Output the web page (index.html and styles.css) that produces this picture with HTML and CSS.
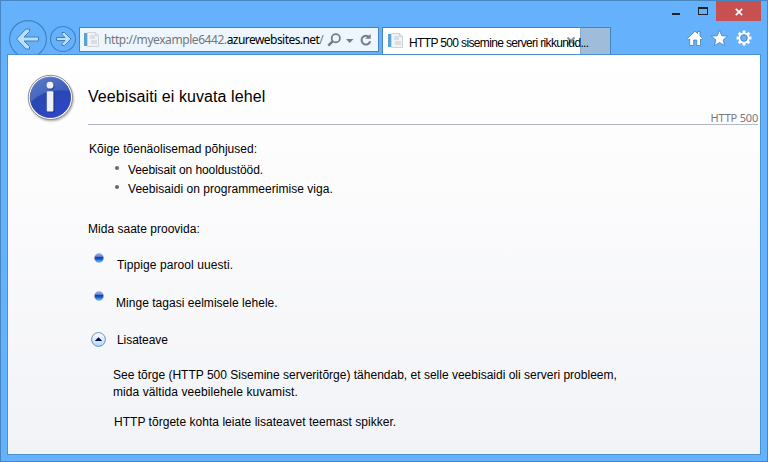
FILE: index.html
```html
<!DOCTYPE html>
<html lang="et">
<head>
<meta charset="utf-8">
<title>HTTP 500 sisemine serveri rikkunud</title>
<link rel="stylesheet" href="styles.css">
</head>
<body>
<div class="window">
  <header class="chrome">
    <div class="nav">
      <svg width="70" height="37" viewBox="8 18 70 37">
        <g fill="none" stroke="#4082bd" stroke-width="1.1"><circle cx="28" cy="39" r="18.4"/><circle cx="63" cy="39" r="12.5"/></g>
        <g fill="#b9e0ff" stroke="#427fb6" stroke-width="1" stroke-linejoin="round">
          <path d="M16.5 39 26 29H29.5V31.5L24 37H38.5V41H24L29.5 46.5V49H26Z"/>
          <path d="M71 39 64.5 32.5H62V34.5L65 37.5H56.5V40.5H65L62 43.5V45.5H64.5Z"/>
        </g>
      </svg>
    </div>
    <div class="address">
      <svg class="page-icon" width="16" height="16" viewBox="0 0 16 16"><use href="#page"/></svg>
      <span class="url">http://myexample6442.<b>azurewebsites.net</b>/</span>
      <svg class="address-tools" width="46" height="20" viewBox="328 29 46 20" fill="none" stroke="#777c82">
        <circle cx="336.8" cy="37.2" r="4.1" stroke-width="1.8"/><path d="M333.6 40.4 329.3 44.7" stroke-width="2.5"/>
        <path d="M347 38H354.5L350.7 42Z" fill="#777c82" stroke="none"/>
        <path d="M370 35.9A4.4 4.4 0 1 0 371.2 40.2" stroke-width="2"/><path d="M366 37.8H371.7V33Z" fill="#777c82" stroke="none"/>
      </svg>
    </div>
    <div class="tab">
      <svg class="page-icon" width="16" height="16" viewBox="0 0 16 16"><use href="#page"/></svg>
      <span class="tab-title">HTTP 500 sisemine serveri rikkunud...</span>
      <svg class="tab-close" width="8" height="8" viewBox="0 0 8 8"><path d="M.5.5 7.5 7.5M7.5.5.5 7.5" stroke="#8b8b8b" stroke-width="2"/></svg>
    </div>
    <div class="new-tab"></div>
    <div class="right">
      <div class="controls">
        <svg width="44" height="20" viewBox="672 1 44 20"><path d="M672 13h8v2h-8z" fill="#222"/><path d="M698 7h10v8h-10zM699 9v5h8V9z" fill="#222" fill-rule="evenodd"/></svg>
        <div class="close"><svg width="8" height="8" viewBox="0 0 8 8"><path d="M.8.8 7.2 7.2M7.2.8.8 7.2" stroke="#fff" stroke-width="1.7"/></svg></div>
      </div>
      <svg class="tools" width="68" height="18" viewBox="686 29 68 18" fill="#fff" stroke="#447fb2" stroke-width=".8">
        <path d="M687.5 38.5 695 31.2 697.5 33.5V31.5H700V36L702.5 38.5 701.3 39.8 700.5 39V45.5H696.7V40H693.7V45.5H689.7V39L688.8 39.8Z"/>
        <path d="M719.5 30.2 721.8 35.7 727.7 36.1 723.1 39.9 724.7 45.7 719.5 42.5 714.3 45.7 715.9 39.9 711.3 36.1 717.2 35.7Z"/>
        <g transform="translate(744 38)">
          <g stroke="none"><g id="teeth"><path d="M-1.4-7.4h2.8v3h-2.8zM-1.4 4.4h2.8v3h-2.8z"/><path d="M-1.4-7.4h2.8v3h-2.8zM-1.4 4.4h2.8v3h-2.8z" transform="rotate(90)"/></g><use href="#teeth" transform="rotate(45)"/></g>
          <circle r="4.5" fill="none" stroke="#fff" stroke-width="2.2"/><circle r="3.3" fill="#65b1fb"/>
        </g>
      </svg>
    </div>
  </header>

  <main class="page">
    <div class="heading">
      <svg width="50" height="50" viewBox="26 73 50 50">
        <defs>
          <linearGradient id="blue" x1="0" y1="0" x2=".5" y2="1"><stop stop-color="#284a9e"/><stop offset=".5" stop-color="#2848ae"/><stop offset="1" stop-color="#3045ca"/></linearGradient>
          <linearGradient id="shine" x1="0" y1="0" x2="1" y2="1"><stop stop-color="#7f9fe0" stop-opacity=".65"/><stop offset="1" stop-color="#6284d6" stop-opacity=".2"/></linearGradient>
          <linearGradient id="ball" x1="0" y1="0" x2="0" y2="1"><stop stop-color="#a9b6ee"/><stop offset=".35" stop-color="#6078d0"/><stop offset=".45" stop-color="#1738b0"/><stop offset=".65" stop-color="#1864cc"/><stop offset="1" stop-color="#62d5f4"/></linearGradient>
          <linearGradient id="button" x1="0" y1="0" x2="0" y2="1"><stop stop-color="#fff"/><stop offset=".5" stop-color="#d8ebf8"/><stop offset="1" stop-color="#a5dcf5"/></linearGradient>
          <filter id="soft" x="-20%" y="-20%" width="140%" height="140%"><feGaussianBlur stdDeviation="1"/></filter>
          <g id="page"><path d="M3.5.5H11.5L14.5 3.5V14.5H3.5Z" fill="#f2f3f5" stroke="#d0d3d7"/><path d="M11.5.5V3.5H14.5" fill="none" stroke="#d0d3d7"/><path d="M6 4h5M6 6h5M7 9h6M7 11h6" stroke="#c3c8ce"/><path d="M0 1h3v13H0z" fill="#57a4d2"/></g>
        </defs>
        <circle cx="51.3" cy="98.8" r="22.3" fill="#777" opacity=".65" filter="url(#soft)"/>
        <circle cx="50.4" cy="97.4" r="22.1" fill="#fff" stroke="#8e8e93" stroke-width="1"/>
        <circle cx="50.4" cy="97.4" r="20.2" fill="url(#blue)" stroke="#1f3a87" stroke-width=".7"/>
        <path d="M31 102A19.8 19.8 0 0 1 69.4 91Q45 87 31 102Z" fill="url(#shine)"/>
        <g fill="#18286d" opacity=".5" transform="translate(1 1)"><circle cx="50.2" cy="85.4" r="3.4"/><rect x="47" y="91.5" width="6.8" height="20" rx="1"/></g>
        <g fill="#f1f1f4"><circle cx="50" cy="85.2" r="3.4"/><rect x="46.8" y="91.3" width="6.6" height="20.2" rx="1"/></g>
      </svg>
      <div class="heading-line"><h1>Veebisaiti ei kuvata lehel</h1><span class="code">HTTP 500</span></div>
    </div>

    <p class="causes-title">Kõige tõenäolisemad põhjused:</p>
    <ul class="causes">
      <li><i></i><span class="cause-a">Veebisait on hooldustööd.</span></li>
      <li><i></i><span class="cause-b">Veebisaidi on programmeerimise viga.</span></li>
    </ul>
    <p class="try-title">Mida saate proovida:</p>
    <ul class="actions">
      <li><svg class="ball" width="10" height="10" viewBox="0 0 10 10"><circle cx="5" cy="5" r="4.5" fill="url(#ball)" stroke="#8798d2" stroke-width=".5"/></svg><span class="action-a">Tippige parool uuesti.</span></li>
      <li><svg class="ball" width="10" height="10" viewBox="0 0 10 10"><circle cx="5" cy="5" r="4.5" fill="url(#ball)" stroke="#8798d2" stroke-width=".5"/></svg><span class="action-b">Minge tagasi eelmisele lehele.</span></li>
      <li class="more"><svg width="16" height="16" viewBox="0 0 16 16"><circle cx="8.5" cy="7.5" r="6.9" fill="url(#button)" stroke="#6d8dbe"/><path d="M4.8 9H12.2L8.5 5.3Z" fill="#060650"/></svg><span class="action-c">Lisateave</span></li>
    </ul>
    <div class="details">
      <p><span class="detail-a">See tõrge (HTTP 500 Sisemine serveritõrge) tähendab, et selle veebisaidi oli serveri probleem,</span><br><span class="detail-b">mida vältida veebilehele kuvamist.</span></p>
      <p><span class="detail-c">HTTP tõrgete kohta leiate lisateavet teemast spikker.</span></p>
    </div>
  </main>
</div>
</body>
</html>
```
FILE: styles.css
```css
* { box-sizing: border-box; }
body { margin: 0; overflow: hidden; font: 12px/17px "Liberation Sans", sans-serif; color: #000; }
p, h1, ul { margin: 0; padding: 0; }
ul { list-style: none; }
svg { display: block; flex: none; }
.window { width: 768px; height: 462px; padding: 0 6px; border: 1px solid #4587c1; background: #65b1fb; }
.chrome { height: 53px; display: flex; align-items: flex-end; }
.nav { width: 72px; height: 36px; padding-left: 1px; overflow: hidden; }
.address { width: 300px; height: 25px; margin-bottom: 2px; border: 1px solid #4583ba; background: #edf6fe; display: flex; align-items: center; padding-left: 4px; }
.page-icon { margin-right: 4px; }
.url { width: 223px; white-space: nowrap; color: #74777a; font: 12px/20px "Noto Sans", sans-serif; letter-spacing: -.43px; }
.url b { color: #000; font-weight: 400; letter-spacing: -.55px; }
.tab { position: relative; width: 199px; height: 27px; margin-left: 3px; padding-left: 5px; border: 1px solid #4583ba; border-bottom: 0; border-right-color: #8ba9c5; background: #fff; display: flex; align-items: center; }
.tab-title { position: relative; z-index: 1; white-space: nowrap; letter-spacing: -.64px; padding: 4px 0 0 1px; }
.tab-close { position: absolute; left: 184px; top: 9px; }
.new-tab { width: 30px; height: 27px; background: #9fbddb; border: 1px solid #4583ba; border-left: 0; border-bottom: 0; }
.right { flex: 1; align-self: stretch; display: flex; flex-direction: column; align-items: flex-end; }
.controls { display: flex; }
.close { width: 45px; height: 20px; background: #c75050; display: flex; align-items: center; justify-content: center; padding-top: 1px; }
.tools { margin: 8px 7px 0 0; }
.page { height: 401px; border: 1px solid #4b92d0; background: linear-gradient(#fff, #fcfcfd 30%, #f2f3f7); padding: 0 2px 0 18px; }
.heading { display: flex; height: 70px; }
.heading > svg { margin-top: 18px; }
.heading-line { flex: 1; margin-left: 12px; border-bottom: 1px solid #b5b8ca; display: flex; justify-content: space-between; align-items: flex-end; }
h1 { font-size: 16px; line-height: 20px; font-weight: 400; letter-spacing: .08px; margin-bottom: 17px; }
.code { color: #77777b; font: 11px/14px "Noto Sans", sans-serif; letter-spacing: -.2px; margin-bottom: -1px; }
.causes-title { margin: 16px 0 0 63px; letter-spacing: .02px; }
.causes { margin: 4px 0 0 89px; }
.causes li { display: flex; height: 19px; }
.causes i { width: 4px; height: 4px; border-radius: 50%; background: #68686c; margin: 4px 9px 0 0; }
.try-title { margin: 21px 0 0 62px; letter-spacing: .02px; }
.actions { margin: 15px 0 0 65px; }
.actions li { display: flex; height: 38px; }
.actions span { margin-top: 4px; }
.ball { margin: 0 13px 0 3px; }
.actions .action-b { margin-left: -1px; }
.actions .more { height: 25px; }
.more svg { margin: 3px 10px 0 -1px; }
.actions .more span { margin: 3px 0 0 1px; }
.details { margin: 13px 0 0 87px; }
.details p + p { margin: 13px 0 0 1px; }
.cause-a { letter-spacing: -.1px; }
.cause-b { letter-spacing: .04px; }
.action-a { letter-spacing: .08px; }
.action-b { letter-spacing: .03px; }
.action-c { letter-spacing: -.05px; }
.detail-a { letter-spacing: .005px; }
.detail-b { letter-spacing: .08px; }
.detail-c { letter-spacing: .03px; }
```
